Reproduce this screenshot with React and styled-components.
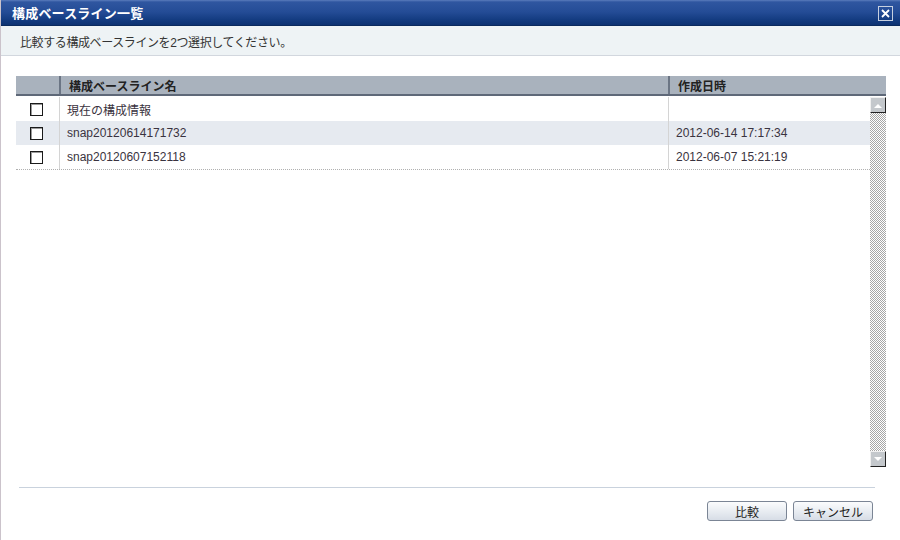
import { styled, createGlobalStyle } from "styled-components";

const GlobalStyle = createGlobalStyle`
    html, body {
        margin: 0;
        padding: 0;
        background: #ffffff;
    }
    body {
        font-family: "Liberation Sans", "Noto Sans CJK JP", sans-serif;
        font-size: 12px;
        color: #333333;
    }
`

const Dialog = styled.div`
    width: 900px;
    height: 540px;
    box-sizing: border-box;
    border-left: 1px solid #cbc3cb;
    display: flex;
    flex-direction: column;
    background: #ffffff;
`

const TitleBar = styled.div`
    height: 25px;
    flex-shrink: 0;
    display: flex;
    align-items: center;
    justify-content: space-between;
    padding: 0 7px 0 11px;
    background: linear-gradient(to bottom, #5a7cbc 0px, #2f56a0 2px, #244c96 12px, #133b80 20px, #0d3272 25px);
    border-bottom: 1px solid #0a2a5e;
`

const Title = styled.span`
    color: #ffffff;
    font-weight: bold;
    font-size: 13px;
    letter-spacing: 0.2px;
`

const CloseButton = styled.div`
    width: 13px;
    height: 13px;
    border: 1px solid #c7d0e0;
    display: flex;
    align-items: center;
    justify-content: center;
    margin-top: 1px;
`

const Instruction = styled.div`
    height: 30px;
    flex-shrink: 0;
    display: flex;
    align-items: center;
    padding: 2px 0 0 19px;
    box-sizing: border-box;
    background-color: #eef3f5;
    border-bottom: 1px solid #d2d7de;
    color: #333333;
    letter-spacing: -0.4px;
`

const Content = styled.div`
    flex: 1;
    display: flex;
    flex-direction: column;
    padding: 20px 14px 0 15px;
`

const Table = styled.div`
    display: flex;
    flex-direction: column;
    height: 391px;
`

const HeaderRow = styled.div`
    display: grid;
    grid-template-columns: 43px 609px 1fr;
    height: 18px;
    background: #a9b2bd;
    border-bottom: 2px solid #5e6878;
`

const HeaderCell = styled.div`
    display: flex;
    align-items: center;
    padding-left: 8px;
    font-weight: bold;
    color: #222222;
    border-left: ${props => props.first ? "none" : "2px solid #6b7584"};
    padding-top: 1px;
`

const Body = styled.div`
    flex: 1;
    display: flex;
    padding-top: 1px;
`

const Rows = styled.div`
    flex: 1;
    display: flex;
    flex-direction: column;
`

const RowList = styled.div`
    border-bottom: 1px dotted #b0b0b0;
`

const Row = styled.div`
    display: grid;
    grid-template-columns: 43px 609px 1fr;
    height: 24px;
    background: ${props => props.alt ? "#e6eaf0" : "#ffffff"};
`

const Cell = styled.div`
    display: flex;
    align-items: center;
    padding-left: ${props => props.center ? "0" : "7px"};
    justify-content: ${props => props.center ? "center" : "flex-start"};
    border-left: ${props => props.first ? "none" : "1px solid #d4d4d4"};
    color: #3a3340;
`

const CheckBox = styled.span`
    width: 11px;
    height: 11px;
    border: 1px solid #1a1a1a;
    box-shadow: inset 1px 1px 0 #9a9a9a;
    background: #ffffff;
    margin-right: 2px;
`

const Scrollbar = styled.div`
    width: 16px;
    display: flex;
    flex-direction: column;
    justify-content: space-between;
    background-color: #ffffff;
    background-image: conic-gradient(#a6a6a6 25%, #ffffff 0 50%, #a6a6a6 0 75%, #ffffff 0);
    background-size: 2px 2px;
`

const ScrollButton = styled.div`
    width: 16px;
    height: 16px;
    box-sizing: border-box;
    background: #c4c8cc;
    border: 1px solid;
    border-color: #f0f0f0 #222222 #222222 #f0f0f0;
    display: flex;
    align-items: center;
    justify-content: center;
`

const Footer = styled.div`
    margin: 20px 11px 0 3px;
    border-top: 1px solid #c9d2dd;
    display: flex;
    justify-content: flex-end;
    gap: 6px;
    padding-top: 13px;
    padding-right: 2px;
`

const Button = styled.button`
    width: 80px;
    height: 20px;
    border: 1px solid #7b8595;
    border-radius: 3px;
    background: linear-gradient(to bottom, #fbfcfd 0%, #e9edf2 50%, #d7dde6 100%);
    font-family: "Liberation Sans", "Noto Sans CJK JP", sans-serif;
    font-size: 12px;
    color: #222222;
    padding: 0;
    cursor: pointer;
`

const rows = [
    { name: "現在の構成情報", date: "" },
    { name: "snap20120614171732", date: "2012-06-14 17:17:34" },
    { name: "snap20120607152118", date: "2012-06-07 15:21:19" },
]

const App = () => {
    return (
        <>
            <GlobalStyle />
            <Dialog>
                <TitleBar>
                    <Title>構成ベースライン一覧</Title>
                    <CloseButton>
                        <svg width="9" height="9" viewBox="0 0 9 9">
                            <path d="M1 1 L8 8 M8 1 L1 8" stroke="#ffffff" strokeWidth="1.8" />
                        </svg>
                    </CloseButton>
                </TitleBar>
                <Instruction>比較する構成ベースラインを2つ選択してください。</Instruction>
                <Content>
                    <Table>
                        <HeaderRow>
                            <HeaderCell first />
                            <HeaderCell>構成ベースライン名</HeaderCell>
                            <HeaderCell>作成日時</HeaderCell>
                        </HeaderRow>
                        <Body>
                            <Rows>
                                <RowList>
                                    {rows.map((r, i) => (
                                        <Row key={r.name} alt={i === 1}>
                                            <Cell first center><CheckBox /></Cell>
                                            <Cell>{r.name}</Cell>
                                            <Cell>{r.date}</Cell>
                                        </Row>
                                    ))}
                                </RowList>
                            </Rows>
                            <Scrollbar>
                                <ScrollButton>
                                    <svg width="8" height="5" viewBox="0 0 8 5">
                                        <path d="M0 5 L4 1 L8 5 Z" fill="#ffffff" />
                                    </svg>
                                </ScrollButton>
                                <ScrollButton>
                                    <svg width="8" height="5" viewBox="0 0 8 5">
                                        <path d="M0 0 L4 4 L8 0 Z" fill="#ffffff" />
                                    </svg>
                                </ScrollButton>
                            </Scrollbar>
                        </Body>
                    </Table>
                    <Footer>
                        <Button>比較</Button>
                        <Button>キャンセル</Button>
                    </Footer>
                </Content>
            </Dialog>
        </>
    )
}

export default App;
